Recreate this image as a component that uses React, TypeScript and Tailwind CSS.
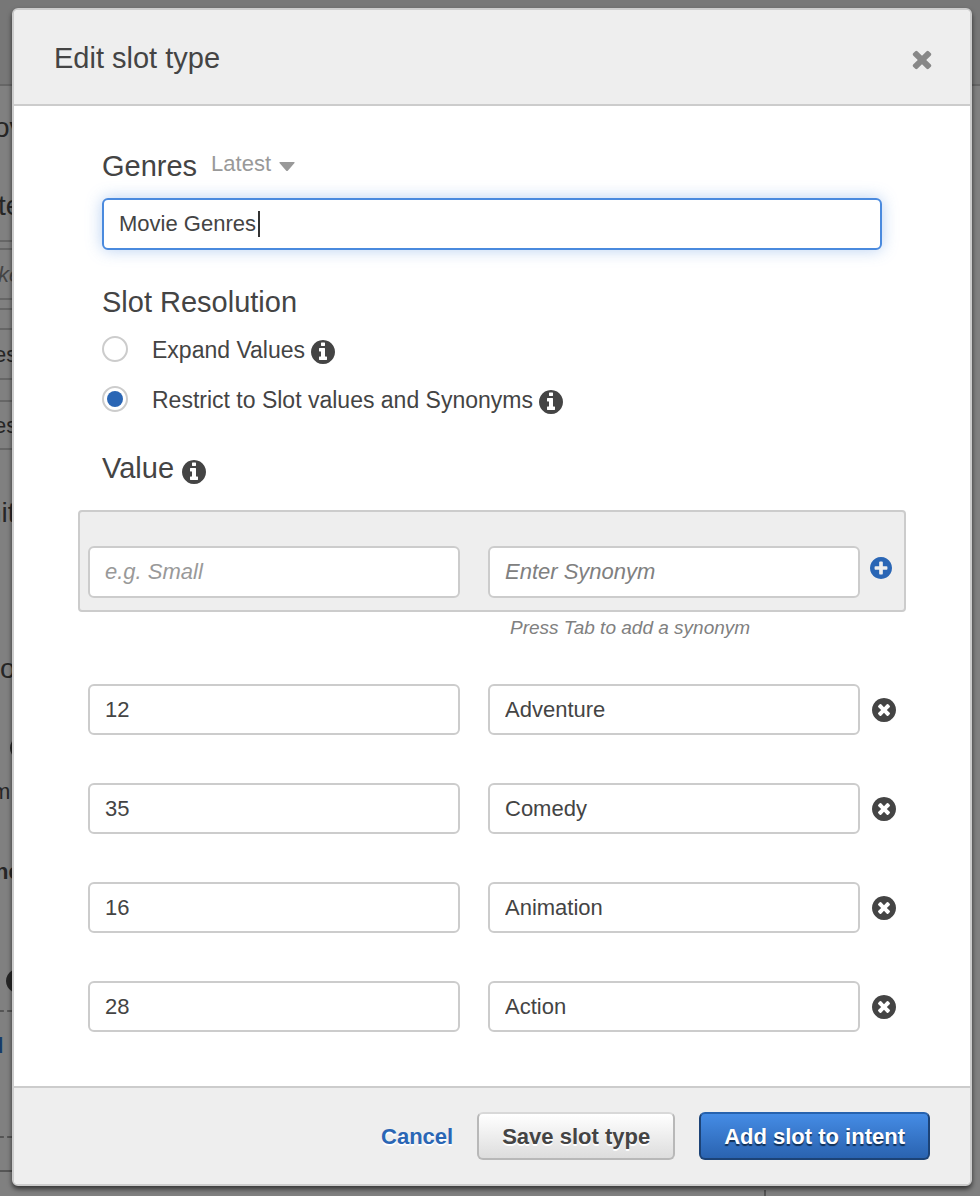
import React, { useState } from "react";

const DISC =
  "M1664 896q0 209-103 385.500t-279.500 279.500-385.500 103-385.500-103-279.500-279.500-103-385.500 103-385.500 279.500-279.500 385.500-103 385.500 103 279.500 279.500 103 385.500z";

const GLYPHS = {
  info:
    DISC +
    "M1152 1376v-160q0-14-9-23t-23-9h-96v-512q0-14-9-23t-23-9h-320q-14 0-23 9t-9 23v160q0 14 9 23t23 9h96v320h-96q-14 0-23 9t-9 23v160q0 14 9 23t23 9h448q14 0 23-9t9-23zM1024 480v-160q0-14-9-23t-23-9h-192q-14 0-23 9t-9 23v160q0 14 9 23t23 9h192q14 0 23-9t9-23z",
  remove:
    DISC +
    "M1277 1122q0-26-19-45l-181-181 181-181q19-19 19-45 0-27-19-46l-90-90q-19-19-46-19-26 0-45 19l-181 181-181-181q-19-19-45-19-27 0-46 19l-90 90q-19 19-19 46 0 26 19 45l181 181-181 181q-19 19-19 45 0 27 19 46l90 90q19 19 46 19 26 0 45-19l181-181 181 181q19 19 45 19 27 0 46-19l90-90q19-19 19-46z",
  add:
    DISC +
    "M1344 960v-128q0-26-19-45t-45-19h-256v-256q0-26-19-45t-45-19h-128q-26 0-45 19t-19 45v256h-256q-26 0-45 19t-19 45v128q0 26 19 45t45 19h256v256q0 26 19 45t45 19h128q26 0 45-19t19-45v-256h256q26 0 45-19t19-45z",
  close:
    "M1490 1322q0 40-28 68l-136 136q-28 28-68 28t-68-28l-294-294-294 294q-28 28-68 28t-68-28l-136-136q-28-28-28-68t28-68l294-294-294-294q-28-28-28-68t28-68l136-136q28-28 68-28t68 28l294 294 294-294q28-28 68-28t68 28l136 136q28 28 28 68t-28 68l-294 294 294 294q28 28 28 68z",
};

function Glyph({ name, className }: { name: keyof typeof GLYPHS; className: string }) {
  return (
    <svg viewBox="128 128 1536 1536" fill="currentColor" aria-hidden="true" className={className}>
      <path fillRule="evenodd" d={GLYPHS[name]} />
    </svg>
  );
}

const field =
  "w-full min-w-0 flex-1 rounded-md border-2 border-[#cccccc] bg-white px-[15px] text-[22px] text-[#444444] outline-none";

function Backdrop() {
  return (
    <div aria-hidden="true" className="col-start-1 row-start-1 flex flex-col overflow-hidden bg-[#808080] text-[#262626]">
      <div className="h-[86px] border-b-2 border-[#666666] bg-[#777777]" />
      <div className="flex w-3 flex-col overflow-hidden whitespace-nowrap">
        <div className="-ml-[6px] h-[78px] pt-[22px] text-[28px] leading-10">ov</div>
        <div className="-ml-[2px] h-[76px] pt-[22px] text-[28px] leading-10">te</div>
        <div className="h-[8px] border-t-2 border-[#666666]" />
        <div className="-ml-[2px] h-[52px] border-y-2 border-[#666666] text-[22px] leading-[50px] text-[#444444] italic">ke</div>
        <div className="mt-2 h-5 border-t-2 border-[#666666]" />
        <div className="-ml-[6px] h-[52px] border-y-2 border-[#666666] text-[22px] leading-[50px]">es</div>
        <div className="mt-5 -ml-[6px] h-[50px] border-y-2 border-[#666666] text-[22px] leading-[48px]">es</div>
        <div className="mt-[38px] -ml-[14px] h-[50px] text-[28px] leading-[50px]">nit</div>
        <div className="mt-[106px] h-[50px] text-[28px] leading-[50px]">o</div>
        <div className="mt-[42px] h-6 pl-[10px]">
          <Glyph name="info" className="h-6 w-6" />
        </div>
        <div className="mt-3 -ml-[8px] h-10 text-[22px] leading-10">m</div>
        <div className="mt-10 -ml-[5px] h-10 text-[22px] leading-10 font-bold">ne</div>
        <div className="mt-[77px] h-6 pl-[6px]">
          <Glyph name="info" className="h-6 w-6" />
        </div>
        <div className="mt-[17px] -ml-[1px] h-[128px] border-y-2 border-dashed border-[#555555]">
          <div className="-ml-[9px] pt-[14px] text-[22px] leading-10 font-bold text-[#173a68]">d</div>
        </div>
        <div className="mt-8 border-t-2 border-dashed border-[#555555]" />
      </div>
      <div className="mt-auto ml-[78%] h-[6px] border-l-2 border-[#555555]" />
    </div>
  );
}

const initialRows = [
  { value: "12", synonym: "Adventure" },
  { value: "35", synonym: "Comedy" },
  { value: "16", synonym: "Animation" },
  { value: "28", synonym: "Action" },
];

export default function App() {
  const [name, setName] = useState("Movie Genres");
  const [mode, setMode] = useState("restrict");
  const [rows, setRows] = useState(initialRows);
  const [draft, setDraft] = useState({ value: "", synonym: "" });

  const addRow = () => {
    if (!draft.value) return;
    setRows([...rows, draft]);
    setDraft({ value: "", synonym: "" });
  };

  const modes = [
    { id: "expand", label: "Expand Values" },
    { id: "restrict", label: "Restrict to Slot values and Synonyms" },
  ];

  return (
    <div className="grid min-h-screen grid-cols-1 font-['Liberation_Sans',Arial,sans-serif] text-[#444444]">
      <Backdrop />
      <div
        role="dialog"
        aria-labelledby="dialog-title"
        className="z-10 col-start-1 row-start-1 mt-2 mr-2 mb-[10px] ml-3 flex flex-col overflow-hidden rounded-md border-2 border-[#cccccc] bg-white shadow-[0_3px_5px_rgba(0,0,0,0.6)]"
      >
        <header className="flex h-24 items-center justify-between border-b-2 border-[#cccccc] bg-[#eeeeee] pr-9 pl-10">
          <h1 id="dialog-title" className="pt-[2px] text-[29px] leading-10">Edit slot type</h1>
          <button type="button" aria-label="Close" className="mt-1 text-[#888888]">
            <Glyph name="close" className="h-6 w-6" />
          </button>
        </header>

        <main className="flex-1 pr-16 pb-[54px] pl-16">
          <div className="px-6 pt-10">
            <div className="flex h-[52px] items-center gap-[14px] pb-5">
              <label htmlFor="slot-name" className="pt-2 text-[29px] leading-10">Genres</label>
              <button type="button" className="flex items-center gap-2 pt-1 text-[22px] leading-8 text-[#999999]">
                Latest
                <svg viewBox="0 0 16 9" className="mt-1 h-[9px] w-4" fill="currentColor" aria-hidden="true">
                  <path d="M1 0h14q1 0 .5 1L9 8.500q-1 1-2 0L.5 1Q0 0 1 0z" />
                </svg>
              </button>
            </div>
            <div className="grid grid-cols-1 items-center">
              <input
                id="slot-name"
                value={name}
                onChange={(e) => setName(e.target.value)}
                className="col-start-1 row-start-1 h-[52px] w-full rounded-md border-2 border-[#4a8ade] bg-white px-[15px] text-[22px] shadow-[0_0_16px_rgba(74,138,222,0.4)] outline-none"
              />
              <span aria-hidden="true" className="pointer-events-none col-start-1 row-start-1 ml-[156px] h-[26px] w-[2px] bg-[#333333]" />
            </div>

            <fieldset className="pt-8">
              <legend className="float-left w-full text-[29px] leading-10">Slot Resolution</legend>
              <div className="clear-both flex flex-col pt-[2px]">
                {modes.map((m) => (
                  <div key={m.id} className="flex h-[50px] items-center">
                    <input
                      id={m.id}
                      type="radio"
                      name="mode"
                      checked={mode === m.id}
                      onChange={() => setMode(m.id)}
                      className="h-[26px] w-[26px] appearance-none rounded-full border-2 border-[#cccccc] bg-white bg-clip-content p-[3px] checked:bg-[#2a66b5]"
                    />
                    <label htmlFor={m.id} className="ml-6 pt-[2px] text-[23px] leading-8">{m.label}</label>
                    <Glyph name="info" className="mt-[6px] ml-[6px] h-6 w-6" />
                  </div>
                ))}
              </div>
            </fieldset>

            <h2 className="flex items-center gap-2 pt-6 text-[29px] leading-10">
              Value
              <Glyph name="info" className="mt-2 h-6 w-6" />
            </h2>
          </div>

          <div className="mt-[22px] flex items-center gap-7 rounded border-2 border-[#cccccc] bg-[#eeeeee] pt-[34px] pr-3 pb-3 pl-2">
            <input
              aria-label="Value"
              placeholder="e.g. Small"
              value={draft.value}
              onChange={(e) => setDraft({ ...draft, value: e.target.value })}
              className={field + " h-[52px] placeholder:text-[#999999] placeholder:italic"}
            />
            <input
              aria-label="Synonym"
              placeholder="Enter Synonym"
              value={draft.synonym}
              onChange={(e) => setDraft({ ...draft, synonym: e.target.value })}
              className={field + " h-[52px] placeholder:text-[#808080] placeholder:italic"}
            />
            <button type="button" aria-label="Add value" onClick={addRow} className="-ml-[18px] pb-2 text-[#2a66b5]">
              <Glyph name="add" className="h-[22px] w-[22px]" />
            </button>
          </div>

          <div className="grid grid-cols-2 pt-1">
            <p className="col-start-2 pl-[18px] text-[19px] leading-6 text-[#808080] italic">Press Tab to add a synonym</p>
          </div>

          <div className="flex flex-col gap-12 pt-11 pr-[10px] pl-[10px]">
            {rows.map((row, i) => (
              <div key={i} className="flex items-center gap-7">
                <input aria-label="Value" defaultValue={row.value} className={field + " h-[51px]"} />
                <input aria-label="Synonym" defaultValue={row.synonym} className={field + " h-[51px]"} />
                <button
                  type="button"
                  aria-label="Remove value"
                  onClick={() => setRows(rows.filter((_, n) => n !== i))}
                  className="-ml-4"
                >
                  <Glyph name="remove" className="h-6 w-6" />
                </button>
              </div>
            ))}
          </div>
        </main>

        <footer className="flex h-[98px] items-center justify-end gap-6 border-t-2 border-[#cccccc] bg-[#eeeeee] pr-10 text-[22px] font-bold">
          <button type="button" className="text-[#2a66b5] [text-shadow:0_2px_0_#ffffff]">Cancel</button>
          <button
            type="button"
            className="h-12 rounded-md border-2 border-[#b8b8b8] border-t-[#d8d8d8] bg-linear-to-b from-white to-[#dddddd] px-[23px] [text-shadow:0_2px_0_#ffffff]"
          >
            Save slot type
          </button>
          <button
            type="button"
            className="h-12 rounded-md border-2 border-[#1c4377] border-t-[#2662ae] bg-linear-to-b from-[#458ce5] to-[#2a63b0] px-[23px] text-white [text-shadow:0_2px_1px_#123056]"
          >
            Add slot to intent
          </button>
        </footer>
      </div>
    </div>
  );
}
